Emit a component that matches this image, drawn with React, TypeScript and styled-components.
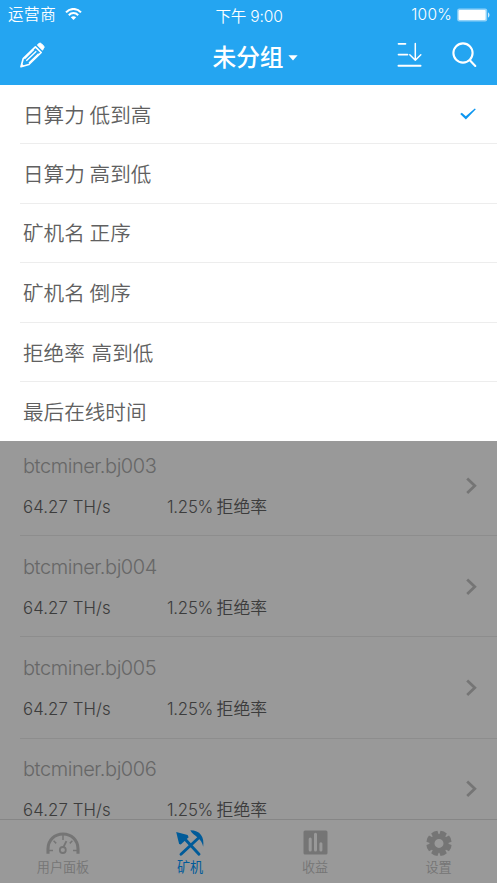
import React from 'react';
import styled, { createGlobalStyle } from 'styled-components';

const GlobalStyle = createGlobalStyle`
  * { box-sizing: border-box; }
  body { margin: 0; background: #fff; overflow: hidden; }
  svg { display: block; flex: none; }
`;

const Screen = styled.div`
  display: flex;
  flex-direction: column;
  width: 497px;
  height: 883px;
  overflow: hidden;
  font-family: Inter, 'Noto Sans CJK SC', sans-serif;
  font-weight: 350;
  background: #fff;
  white-space: nowrap;
`;

const Header = styled.header`
  flex: none;
  height: 85px;
  background: #24a5f1;
  color: #fff;
`;

const StatusBar = styled.div`
  display: grid;
  grid-template-columns: 1fr auto 1fr;
  align-items: center;
  height: 30px;
  padding: 0 7px 0 8px;
  font-size: 15.5px;
  line-height: 28px;
`;

const StatusSide = styled.div<{ $end?: boolean }>`
  display: flex;
  align-items: center;
  justify-content: ${(p) => (p.$end ? 'flex-end' : 'flex-start')};
  gap: ${(p) => (p.$end ? '5px' : '9px')};
  height: 28px;
  margin-top: -2px;
  letter-spacing: ${(p) => (p.$end ? '0.25px' : '0.6px')};
`;

const StatusText = styled.span`
  padding-top: 1px;
`;

const Clock = styled.span`
  padding-top: 3px;
  font-size: 15.6px;
  letter-spacing: -0.2px;
`;

const NavBar = styled.div`
  display: grid;
  grid-template-columns: 1fr auto 1fr;
  align-items: center;
  height: 50px;
  padding: 0 20px;
`;

const Title = styled.h1`
  display: flex;
  align-items: center;
  gap: 4px;
  margin: 0 0 0 13px;
  padding-top: 1px;
  font-size: 23.7px;
  font-weight: 500;
`;

const CaretSlot = styled.span`
  padding-top: 4px;
`;

const Actions = styled.div`
  display: flex;
  justify-content: flex-end;
  gap: 30px;
`;

const Menu = styled.ul`
  flex: none;
  height: 356px;
  margin: 0;
  padding: 0 0 0 20px;
  list-style: none;
`;

const MenuItem = styled.li<{ $gap?: number }>`
  display: flex;
  align-items: center;
  justify-content: space-between;
  height: 59.6px;
  padding: 0 20px 1px 3px;
  border-bottom: 1px solid #ededed;
  color: #606060;
  font-size: 20.6px;
  word-spacing: ${(p) => p.$gap ?? -1}px;
  &:first-child { height: 59px; padding-bottom: 0; }
  &:last-child { border-bottom: 0; height: 58px; }
`;

const Dimmed = styled.div`
  position: relative;
  display: flex;
  flex-direction: column;
  flex: 1;
  min-height: 0;
`;

const Backdrop = styled.div`
  position: absolute;
  inset: 0;
  background: rgba(0, 0, 0, 0.4);
`;

const MinerList = styled.div`
  flex: 1;
  min-height: 0;
  overflow: hidden;
  padding-left: 20px;
`;

const MinerRow = styled.div`
  display: flex;
  align-items: center;
  justify-content: space-between;
  height: 101.2px;
  padding: 2px 20px 0 3px;
  border-bottom: 1px solid #ececec;
  &:first-child { margin-top: -6px; }
`;

const MinerName = styled.div`
  height: 40px;
  color: #acacac;
  font-size: 20px;
  line-height: 40px;
  letter-spacing: -0.45px;
`;

const MinerStats = styled.div`
  display: grid;
  grid-template-columns: 144px auto;
  height: 41px;
  color: #646464;
  font-size: 16.8px;
  line-height: 42px;
`;

const Stat = styled.span<{ $tight?: boolean }>`
  letter-spacing: ${(p) => (p.$tight ? '-0.25px' : '0.1px')};
`;

const StatLabel = styled.span`
  margin-left: -1px;
  letter-spacing: 0.1px;
`;

const TabBar = styled.nav`
  flex: none;
  display: grid;
  grid-template-columns: 126px 128px 122px 125px;
  height: 64px;
  border-top: 1px solid #e0e0e0;
`;

const Tab = styled.div<{ $active?: boolean }>`
  display: flex;
  flex-direction: column;
  align-items: center;
  padding-top: 10px;
  color: ${(p) => (p.$active ? '#0098ff' : '#c4c4c4')};
`;

const TabLabel = styled.span<{ $active?: boolean }>`
  margin-top: 1px;
  font-size: 13.1px;
  line-height: 20px;
  font-weight: ${(p) => (p.$active ? 400 : 350)};
`;

const Wifi = () => (
  <svg width="17" height="13" viewBox="0 0 17 13" fill="none" stroke="#fff" strokeWidth="2">
    <path d="M1 4.3C5-.2 12-.2 16 4.3M3.8 7.2c2.7-2.8 6.7-2.8 9.4 0" />
    <path d="M8.5 12 5.8 9.3c1.6-1.4 3.8-1.4 5.4 0z" fill="#fff" stroke="none" />
  </svg>
);

const Battery = () => (
  <svg width="33" height="14" viewBox="0 0 33 14">
    <rect x=".2" y=".5" width="30" height="13" rx="2" fill="#91d2f8" />
    <rect x="1.6" y="2" width="27" height="10" rx="1" fill="#fff" />
    <path d="M31 4.5c2 .4 2 4.6 0 5z" fill="#c8e9fc" />
  </svg>
);

const Pencil = () => (
  <svg width="25" height="26" viewBox="0 0 25 26" fill="none" stroke="#fff" strokeWidth="1.7" strokeLinejoin="round">
    <path d="M1 24.7 3.2 16.6 15.4 4.8 21.2 10.5 8.9 22.5Z" />
    <path d="m6.3 18.8 10-9.6M9 21 18.6 11.7M4.5 16.7 13.8 7.6" strokeWidth="1.3" />
    <path d="M17.3 3 19 1.5q1.1-1 2.4.2l2.2 2.2q1.2 1.2 0 2.4L22.5 8.2Z" fill="#fff" strokeWidth="1" />
    <path d="m.8 25 .8-3.6 2.8 2.6z" fill="#fff" stroke="none" />
  </svg>
);

const Caret = () => (
  <svg width="10" height="6" viewBox="0 0 10 6"><path d="M.4.3h9.2L5 5.4z" fill="#fff" /></svg>
);

const Sort = () => (
  <svg width="25" height="26" viewBox="0 0 25 26" fill="none" stroke="#fff" strokeLinecap="round" strokeLinejoin="round">
    <path d="M1.5 1.8h7M1.5 12.6h9" strokeWidth="1.7" />
    <path d="M1.5 23.8h22" strokeWidth="2" />
    <path d="M18.3 1.5v16.7M12.8 12.8l5.5 5.5 5.5-5.5" strokeWidth="1.5" />
  </svg>
);

const Search = () => (
  <svg width="25" height="26" viewBox="0 0 25 26" fill="none" stroke="#fff" strokeWidth="2.1" strokeLinecap="round">
    <circle cx="11" cy="11" r="9.6" /><path d="m18.3 18.7 5 5.3" />
  </svg>
);

const Check = () => (
  <svg width="18" height="14" viewBox="0 0 18 14">
    <path d="M1.2 6.9 2.8 5.8 6.8 9.3 15.8 1.4 16.8 2.2 6.9 12.4Z" fill="#0c96f0" />
  </svg>
);

const ChevronIcon = styled.svg`
  margin-top: -1px;
`;

const Chevron = () => (
  <ChevronIcon width="11" height="18" viewBox="0 0 11 18" fill="none" stroke="#c4c4c4" strokeWidth="2.8">
    <path d="m1.2 1.5 7.6 7.3-7.6 7.3" />
  </ChevronIcon>
);

const Gauge = () => (
  <svg width="34" height="26" viewBox="0 0 34 26" fill="none" stroke="currentColor">
    <path d="M2 23.8V18.8C2 10.1 8.7 4 17 4s15 6.1 15 14.8v5" strokeWidth="3.1" />
    <path d="M3 20.5h4M31 20.5h-4M17 5v5M7.6 10.8l2.6 2.6M26.4 10.8l-2.6 2.6" strokeWidth="1.5" />
    <circle cx="16.8" cy="20" r="3" strokeWidth="1.8" />
    <path d="m17.4 17.2 3-6" strokeWidth="1.9" />
  </svg>
);

const Tools = () => (
  <svg width="28" height="27" viewBox="0 0 28 27" fill="none" stroke="currentColor">
    <path d="m8 8 15 16.3M22.5 8 5 24.3" strokeWidth="2.9" strokeLinecap="round" />
    <path d="M.2 2.1 11.6 4.9l1 2.4-7.8 7.3-1.7-.6Z" fill="currentColor" stroke="none" />
    <path d="M14.3.3c4.8 0 8.5 1.5 10.7 4.6 2.1 2.9 2.8 6.7 2.2 11.8-.8-3.9-2.6-6.8-5.6-9.2C18.9 5.1 15.9 3.7 14.3.3Z" fill="currentColor" stroke="none" />
  </svg>
);

const ToolsSlot = styled.span`
  height: 26px;
`;

const Bars = () => (
  <svg width="25" height="26" viewBox="0 0 25 26">
    <path fillRule="evenodd" fill="currentColor" d="M2 .5h21q1.5 0 1.5 1.5v21q0 1.5-1.5 1.5H2Q.5 24.5.5 23V2Q.5.5 2 .5ZM5.7 9v11a1.5 1.5 0 0 0 3 0V9a1.5 1.5 0 0 0-3 0ZM11 4.3V20a1.5 1.5 0 0 0 3 0V4.3a1.5 1.5 0 0 0-3 0Zm5.4 9.4V20a1.5 1.5 0 0 0 3 0v-6.3a1.5 1.5 0 0 0-3 0Z" />
  </svg>
);

const gearAngles = [0, 45, 90, 135, 180, 225, 270, 315];
const Gear = () => (
  <svg width="26" height="26" viewBox="0 0 26 26" fill="currentColor">
    <path fillRule="evenodd" d="M13 3.9a9.5 9.5 0 1 0 0 19 9.5 9.5 0 0 0 0-19Zm0 5a4.5 4.5 0 1 1 0 9 4.5 4.5 0 0 1 0-9Z" />
    {gearAngles.map((a) => (
      <path key={a} d="M9.9 6 9.6 1.2q3.4-1.4 6.8 0L16.1 6Z" transform={`rotate(${a + 22.5} 13 13.4)`} />
    ))}
  </svg>
);

const options = [
  { label: '日算力 低到高', selected: true },
  { label: '日算力 高到低' },
  { label: '矿机名 正序' },
  { label: '矿机名 倒序' },
  { label: '拒绝率 高到低', gap: 1 },
  { label: '最后在线时间' },
];

const miners = ['btcminer.bj003', 'btcminer.bj004', 'btcminer.bj005', 'btcminer.bj006'];

const tabs = [
  { label: '用户面板', icon: <Gauge /> },
  { label: '矿机', icon: <ToolsSlot><Tools /></ToolsSlot>, active: true },
  { label: '收益', icon: <Bars /> },
  { label: '设置', icon: <Gear /> },
];

export default function App() {
  return (
    <Screen>
      <GlobalStyle />
      <Header>
        <StatusBar>
          <StatusSide><StatusText>运营商</StatusText><Wifi /></StatusSide>
          <Clock>下午 9:00</Clock>
          <StatusSide $end><StatusText>100%</StatusText><Battery /></StatusSide>
        </StatusBar>
        <NavBar>
          <Pencil />
          <Title>未分组<CaretSlot><Caret /></CaretSlot></Title>
          <Actions><Sort /><Search /></Actions>
        </NavBar>
      </Header>
      <Menu>
        {options.map((o) => (
          <MenuItem key={o.label} $gap={o.gap}>
            {o.label}
            {o.selected && <Check />}
          </MenuItem>
        ))}
      </Menu>
      <Dimmed>
        <MinerList>
          {miners.map((name) => (
            <MinerRow key={name}>
              <div>
                <MinerName>{name}</MinerName>
                <MinerStats>
                  <Stat>64.27 TH/s</Stat>
                  <Stat $tight>1.25% <StatLabel>拒绝率</StatLabel></Stat>
                </MinerStats>
              </div>
              <Chevron />
            </MinerRow>
          ))}
        </MinerList>
        <TabBar>
          {tabs.map((t) => (
            <Tab key={t.label} $active={t.active}>
              {t.icon}
              <TabLabel $active={t.active}>{t.label}</TabLabel>
            </Tab>
          ))}
        </TabBar>
        <Backdrop />
      </Dimmed>
    </Screen>
  );
}
